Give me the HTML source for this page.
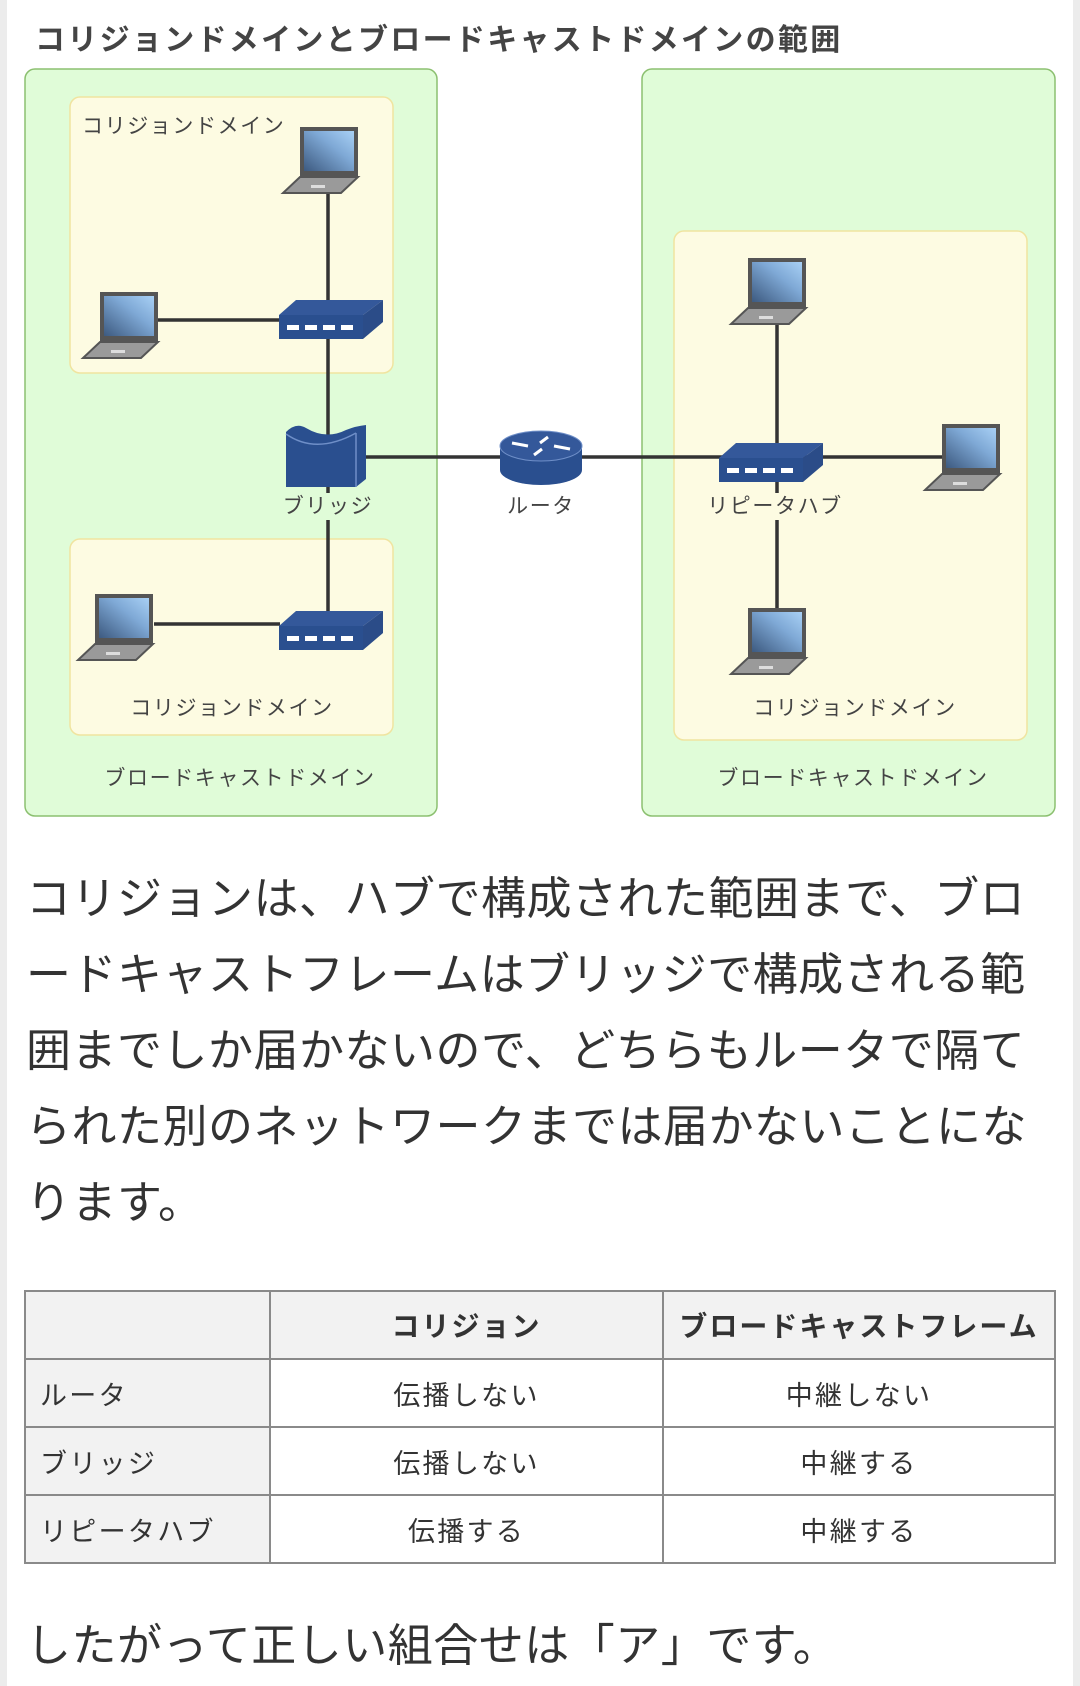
<!DOCTYPE html>
<html><head><meta charset="utf-8"><style>
*{margin:0;padding:0;box-sizing:border-box}
body{width:1080px;height:1686px;background:#fff;position:relative;overflow:hidden;font-family:"Liberation Sans","Noto Sans CJK JP",sans-serif;color:#333}
.strip{position:absolute;top:0;bottom:0;background:#ececec}
.p{position:absolute;left:26px;font-size:45px;line-height:76px;color:#333;width:1050px;letter-spacing:0.5px}
table{position:absolute;left:24px;top:1290px;width:1032px;border-collapse:collapse;table-layout:fixed;font-size:27px;color:#333;letter-spacing:2.3px}
td,th{border:2px solid #8a8a8a;height:68px;text-align:center;font-weight:normal}
th{background:#f2f2f2;font-weight:bold;font-size:28px;letter-spacing:2px}
td.h{background:#f2f2f2;text-align:left;padding-left:14px}
</style></head><body>
<div class="strip" style="left:0;width:7px"></div>
<div class="strip" style="left:1073px;width:7px"></div>
<svg width="1080" height="830" style="position:absolute;left:0;top:0" font-family="Liberation Sans, Noto Sans CJK JP, sans-serif">
<defs>
<linearGradient id="sg" x1="0" y1="1" x2="1" y2="0"><stop offset="0" stop-color="#3d5a80"/><stop offset="0.6" stop-color="#7fa9d6"/><stop offset="1" stop-color="#a8d0f5"/></linearGradient>
<g id="lap">
<rect x="17" y="0" width="58" height="50" fill="#555"/>
<rect x="21" y="4" width="50" height="40" fill="url(#sg)"/>
<polygon points="17,50 75,50 58,66 0,66" fill="#9a9a9a" stroke="#555" stroke-width="2"/>
<rect x="28" y="58" width="14" height="3" fill="#ddd"/>
</g>
<g id="sw">
<polygon points="0,15 17,0 104,0 84,15" fill="#34589a"/>
<polygon points="84,15 104,0 104,22 84,39" fill="#2b4c88"/>
<rect x="0" y="15" width="84" height="24" fill="#2a4f8f"/>
<rect x="8" y="25" width="12" height="5" fill="#fff"/><rect x="26" y="25" width="12" height="5" fill="#fff"/><rect x="44" y="25" width="12" height="5" fill="#fff"/><rect x="62" y="25" width="12" height="5" fill="#fff"/>
</g>
</defs>
<text x="35" y="50" font-size="30" font-weight="bold" fill="#444" letter-spacing="2.3">コリジョンドメインとブロードキャストドメインの範囲</text>
<rect x="25" y="69" width="412" height="747" rx="10" fill="#e0fcd8" stroke="#8cc070" stroke-width="1.5"/>
<rect x="642" y="69" width="413" height="747" rx="10" fill="#e0fcd8" stroke="#8cc070" stroke-width="1.5"/>
<rect x="70" y="97" width="323" height="276" rx="10" fill="#fdfbe2" stroke="#f0e4a0" stroke-width="1.5"/>
<rect x="70" y="539" width="323" height="196" rx="10" fill="#fdfbe2" stroke="#f0e4a0" stroke-width="1.5"/>
<rect x="674" y="231" width="353" height="509" rx="10" fill="#fdfbe2" stroke="#f0e4a0" stroke-width="1.5"/>
<g stroke="#333" stroke-width="3.5">
<line x1="328" y1="193" x2="328" y2="640"/>
<line x1="158" y1="320" x2="280" y2="320"/>
<line x1="154" y1="624" x2="280" y2="624"/>
<line x1="366" y1="457" x2="960" y2="457"/>
<line x1="777" y1="325" x2="777" y2="640"/>
</g>
<rect x="282" y="493" width="94" height="27" fill="#e0fcd8"/>
<rect x="705" y="493" width="140" height="27" fill="#fdfbe2"/>
<use href="#lap" x="283" y="127"/>
<use href="#lap" x="83" y="292"/>
<use href="#lap" x="78" y="594"/>
<use href="#lap" x="731" y="258"/>
<use href="#lap" x="925" y="424"/>
<use href="#lap" x="731" y="608"/>
<use href="#sw" x="279" y="300"/>
<use href="#sw" x="279" y="611"/>
<use href="#sw" x="719" y="443"/>
<path d="M286,432 Q296,422 306,428 Q326,440 346,430 Q356,426 366,425 L366,479 L356,487 L286,487 Z" fill="#2a4f8f"/>
<path d="M286,434 Q316,455 356,433" fill="none" stroke="#6f8fc8" stroke-width="1.5"/>
<line x1="356" y1="433" x2="356" y2="487" stroke="#6f8fc8" stroke-width="1.5"/>
<path d="M500,446 L500,470 A41,15 0 0 0 582,470 L582,446 Z" fill="#2a4f8f"/>
<ellipse cx="541" cy="446" rx="41" ry="15" fill="#34589a" stroke="#6f8fc8" stroke-width="1"/>
<g stroke="#fff" stroke-width="3"><line x1="512" y1="443" x2="528" y2="446"/><line x1="570" y1="449" x2="554" y2="446"/><line x1="548" y1="437" x2="540" y2="443"/><line x1="534" y1="455" x2="542" y2="449"/></g>
<g font-size="21" fill="#444" letter-spacing="1.6">
<text x="82" y="133">コリジョンドメイン</text>
<text x="232" y="715" text-anchor="middle">コリジョンドメイン</text>
<text x="855" y="715" text-anchor="middle">コリジョンドメイン</text>
<text x="240" y="785" text-anchor="middle">ブロードキャストドメイン</text>
<text x="853" y="785" text-anchor="middle">ブロードキャストドメイン</text>
<text x="328" y="513" text-anchor="middle">ブリッジ</text>
<text x="541" y="513" text-anchor="middle">ルータ</text>
<text x="775" y="513" text-anchor="middle">リピータハブ</text>
</g>
</svg>
<div class="p" style="top:861px">コリジョンは、ハブで構成された範囲まで、ブロ<br>ードキャストフレームはブリッジで構成される範<br>囲までしか届かないので、どちらもルータで隔て<br>られた別のネットワークまでは届かないことにな<br>ります。</div>
<table>
<colgroup><col style="width:245px"><col style="width:393px"><col></colgroup>
<tr><th></th><th>コリジョン</th><th>ブロードキャストフレーム</th></tr>
<tr><td class="h">ルータ</td><td>伝播しない</td><td>中継しない</td></tr>
<tr><td class="h">ブリッジ</td><td>伝播しない</td><td>中継する</td></tr>
<tr><td class="h">リピータハブ</td><td>伝播する</td><td>中継する</td></tr>
</table>
<div class="p" style="top:1608px">したがって正しい組合せは「ア」です。</div>
</body></html>
